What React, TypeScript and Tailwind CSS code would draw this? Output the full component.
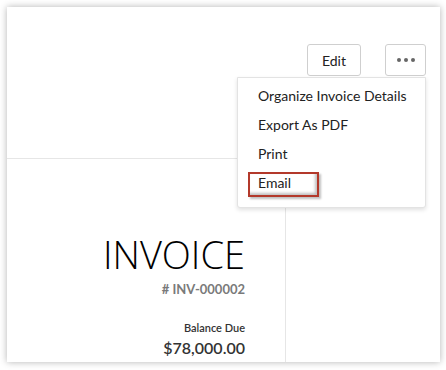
import React from "react";

const font = { fontFamily: "Lato, 'Open Sans', sans-serif" };
const titleFont = { fontFamily: "'Open Sans', Lato, sans-serif" };

const menuItems = ["Organize Invoice Details", "Export As PDF", "Print", "Email"];

export default function App(): React.JSX.Element {
  return (
    <div
      className="h-[370px] w-[446px] bg-white pl-[7px] pt-[7px] text-[#222]"
      style={font}
    >
      <div className="relative flex h-[355px] w-[433px] flex-col overflow-hidden bg-white shadow-[0_0_7px_rgba(0,0,0,0.3)]">
        {/* toolbar */}
        <div className="flex h-[151px] justify-end gap-[24px] pr-[14px] pt-[37px]">
          <button className="flex h-[32px] w-[54px] items-center justify-center rounded-[3px] border border-[#cfcfcf] bg-white text-[14px] text-[#222]">
            Edit
          </button>
          <button className="flex h-[32px] w-[41px] items-center justify-center gap-[3px] rounded-[3px] border border-[#cfcfcf] bg-white">
            <span className="h-[4px] w-[4px] rounded-full bg-[#666]" />
            <span className="h-[4px] w-[4px] rounded-full bg-[#666]" />
            <span className="h-[4px] w-[4px] rounded-full bg-[#666]" />
          </button>
        </div>

        {/* invoice sheet */}
        <div className="flex w-[279px] flex-1 flex-col items-end border-r border-t border-[#e6e6e6] pr-[40px] pt-[76px] text-right">
          <div className="text-[38px] font-light leading-[38px] text-black" style={titleFont}>
            INVOICE
          </div>
          <div className="mt-[8px] text-[13px] font-bold leading-[16px] text-[#7a7a7a]">
            # INV-000002
          </div>
          <div className="mt-[24px] text-[11px] font-semibold leading-[14px] text-[#333]">
            Balance Due
          </div>
          <div className="mt-[3px] text-[16px] font-semibold leading-[20px] text-[#333]">
            $78,000.00
          </div>
        </div>

        {/* dropdown menu */}
        <div className="absolute left-[230px] top-[70px] w-[189px] rounded-b-[3px] border border-[#e3e3e3] bg-white pb-[10px] pt-[3px] shadow-[0_2px_4px_rgba(0,0,0,0.12)]">
          {menuItems.map((item) => (
            <div
              key={item}
              className="relative flex h-[29px] items-center pl-[20px] text-[14px] text-[#222]"
            >
              {item === "Email" ? (
                <div className="absolute left-[10px] top-[4px] h-[25px] w-[71px] border-2 border-[#b3392b] shadow-[inset_-2px_-2px_3px_rgba(0,0,0,0.25),2px_2px_2px_rgba(0,0,0,0.25)]" />
              ) : null}
              <span className="relative">{item}</span>
            </div>
          ))}
        </div>
      </div>
    </div>
  );
}
